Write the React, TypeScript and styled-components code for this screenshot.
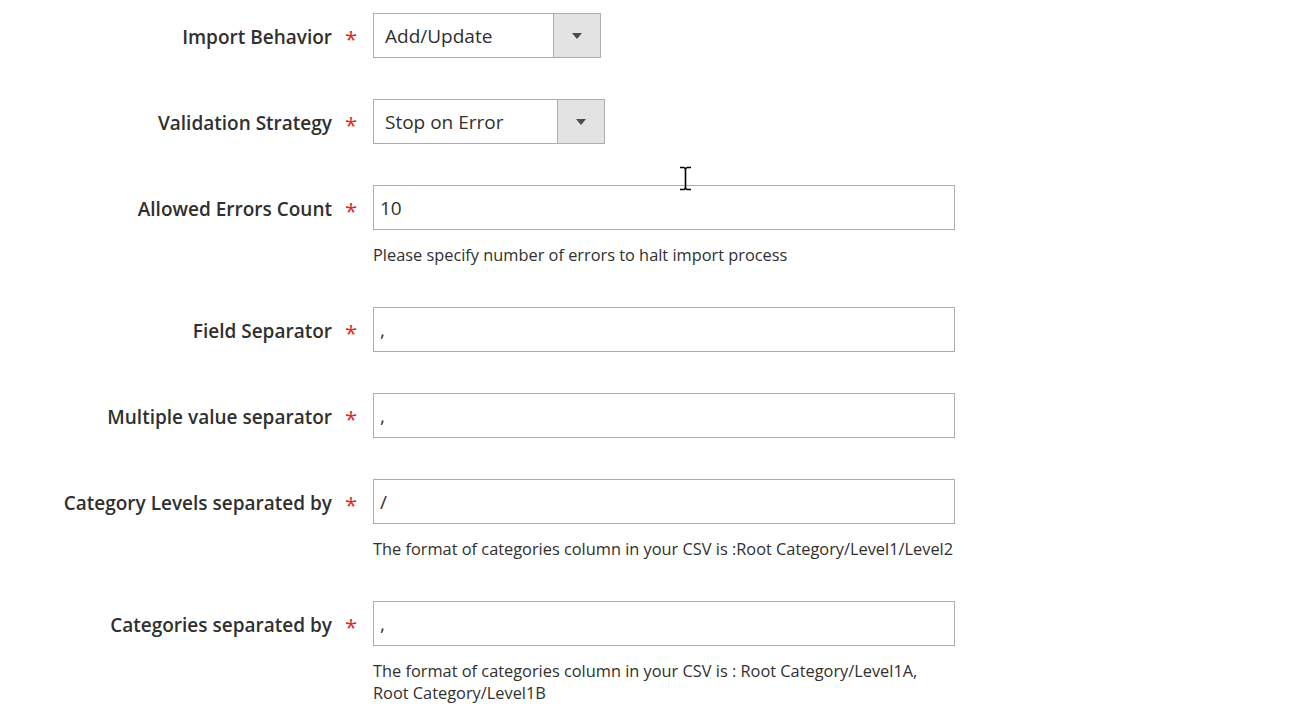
import React from "react";
import styled, { createGlobalStyle } from "styled-components";

const Global = createGlobalStyle`
  html, body { margin: 0; padding: 0; background: #ffffff; }
  body { font-family: "Open Sans", "Liberation Sans", sans-serif; color: #303030; }
`;

const Page = styled.div`
  position: relative;
  width: 1310px;
  height: 710px;
  overflow: hidden;
  padding-top: 13px;
  box-sizing: border-box;
`;

const Form = styled.div`
  display: flex;
  flex-direction: column;
  gap: 41px;
`;

const Row = styled.div`
  display: grid;
  grid-template-columns: 332px 41px 582px;
  align-items: start;
`;

const Label = styled.label`
  height: 45px;
  display: flex;
  align-items: center;
  justify-content: flex-end;
  padding-top: 2px;
  box-sizing: border-box;
  font-size: 19px;
  font-weight: 600;
  color: #303030;
  white-space: nowrap;
`;

const Required = styled.span`
  height: 45px;
  display: flex;
  align-items: center;
  padding-left: 13px;
  padding-top: 5px;
  box-sizing: border-box;
  font-size: 22px;
  font-weight: 400;
  color: #e22626;
`;

const Control = styled.div`
  display: flex;
  flex-direction: column;
`;

const Input = styled.div`
  box-sizing: border-box;
  height: 45px;
  width: 582px;
  border: 1px solid #adadad;
  background: #fff;
  display: flex;
  align-items: center;
  padding-left: 6px;
  font-size: 19px;
  color: #303030;
`;

const Select = styled.div<{ $w: number }>`
  box-sizing: border-box;
  height: 45px;
  width: ${(p) => p.$w}px;
  border: 1px solid #adadad;
  background: #fff;
  display: flex;
  align-items: stretch;
`;

const SelectValue = styled.div`
  flex: 1;
  display: flex;
  align-items: center;
  padding-left: 11px;
  font-size: 19px;
  color: #303030;
`;

const SelectButton = styled.div`
  width: 46px;
  border-left: 1px solid #adadad;
  background: #e3e3e3;
  display: flex;
  align-items: center;
  justify-content: center;
`;

const Note = styled.div`
  margin-top: 14px;
  font-size: 16.35px;
  line-height: 22px;
  color: #303030;
  width: 582px;
`;

const Cursor = styled.svg`
  position: absolute;
  left: 679px;
  top: 166px;
`;

const Arrow = () => (
  <svg width="10" height="6" viewBox="0 0 10 6">
    <path d="M0 0 H10 L5 6 Z" fill="#514943" />
  </svg>
);

type Field = {
  label: string;
  kind: "select" | "input";
  value: string;
  width?: number;
  note?: React.ReactNode;
};

const fields: Field[] = [
  { label: "Import Behavior", kind: "select", value: "Add/Update", width: 228 },
  { label: "Validation Strategy", kind: "select", value: "Stop on Error", width: 232 },
  {
    label: "Allowed Errors Count",
    kind: "input",
    value: "10",
    note: "Please specify number of errors to halt import process",
  },
  { label: "Field Separator", kind: "input", value: "," },
  { label: "Multiple value separator", kind: "input", value: "," },
  {
    label: "Category Levels separated by",
    kind: "input",
    value: "/",
    note: "The format of categories column in your CSV is :Root Category/Level1/Level2",
  },
  {
    label: "Categories separated by",
    kind: "input",
    value: ",",
    note: (
      <>
        The format of categories column in your CSV is : Root Category/Level1A,
        <br />
        Root Category/Level1B
      </>
    ),
  },
];

export default function App() {
  return (
    <Page>
      <Global />
      <Form>
        {fields.map((f) => (
          <Row key={f.label}>
            <Label>{f.label}</Label>
            <Required>*</Required>
            <Control>
              {f.kind === "select" ? (
                <Select $w={f.width ?? 228}>
                  <SelectValue>{f.value}</SelectValue>
                  <SelectButton>
                    <Arrow />
                  </SelectButton>
                </Select>
              ) : (
                <Input>{f.value}</Input>
              )}
              {f.note && <Note>{f.note}</Note>}
            </Control>
          </Row>
        ))}
      </Form>
      <Cursor width="13" height="25" viewBox="0 0 13 25">
        <path d="M1 1.5 H5 M8 1.5 H12 M5 1.5 Q6.5 2 6.5 4 V21 Q6.5 23 5 23.5 H1 M8 1.5 Q6.5 2 6.5 4 M6.5 21 Q6.5 23 8 23.5 H12" stroke="#000" strokeWidth="1.6" fill="none" />
      </Cursor>
    </Page>
  );
}
